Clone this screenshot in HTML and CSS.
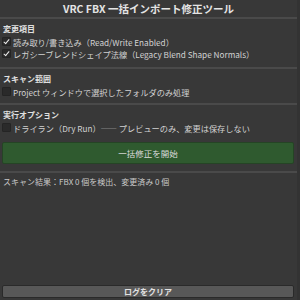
FILE: index.html
```html
<!DOCTYPE html>
<html lang="ja">

<head>
    <meta charset="UTF-8">
    <title>VRC FBX 一括インポート修正ツール</title>
    <link rel="stylesheet" href="styles.css">
</head>

<body>
    <div class="panel">
        <h1 class="title">VRC FBX 一括インポート修正ツール</h1>
        <div class="sep"></div>

        <div class="section sec1">
            <h2>変更項目</h2>
            <label class="row"><span class="box on"></span>読み取り/書き込み（Read/Write Enabled）</label>
            <label class="row"><span class="box on"></span>レガシーブレンドシェイプ法線（Legacy Blend Shape Normals）</label>
        </div>
        <div class="sep"></div>

        <div class="section sec2">
            <h2>スキャン範囲</h2>
            <label class="row"><span class="box"></span>Project ウィンドウで選択したフォルダのみ処理</label>
        </div>
        <div class="sep"></div>

        <div class="section sec3">
            <h2>実行オプション</h2>
            <label class="row"><span class="box"></span>ドライラン（Dry Run）—— プレビューのみ、変更は保存しない</label>
        </div>

        <button class="btn-run">一括修正を開始</button>
        <div class="sep sep-low"></div>

        <p class="result">スキャン結果：FBX 0 個を検出、変更済み 0 個</p>

        <button class="btn-clear">ログをクリア</button>
    </div>
</body>

</html>
```

FILE: styles.css
```css
* {
    margin: 0;
    padding: 0;
    box-sizing: border-box;
}

html,
body {
    height: 100%;
    background: #383838;
}

body {
    font-family: "Noto Sans CJK JP", "Noto Sans", sans-serif;
    color: #d2d2d2;
    font-size: 8.2px;
}

.panel {
    height: 300px;
    display: flex;
    flex-direction: column;
    border-right: 3px solid #333;
}

.title {
    height: 17px;
    line-height: 17px;
    text-align: center;
    font-size: 10.5px;
    font-weight: bold;
    color: #e4e4e4;
}

.sep {
    height: 2px;
    background: #4a4a4a;
}

.section {
    padding: 4px 3px 0 3px;
}

.sec1 {
    padding-bottom: 8px;
}

.sec2 {
    padding-bottom: 6px;
}

h2 {
    height: 12px;
    line-height: 12px;
    font-size: 8px;
    font-weight: bold;
    color: #e0e0e0;
}

.row {
    display: flex;
    align-items: center;
    height: 11px;
    margin-top: 1px;
    white-space: nowrap;
}

.box {
    width: 9px;
    height: 9px;
    margin: 0 2px 0 -1px;
    background: #2a2a2a;
    border: 1px solid #242424;
    border-radius: 1px;
    position: relative;
}

/* check mark */
.box.on::after {
    content: "";
    position: absolute;
    left: 2px;
    top: 0px;
    width: 2px;
    height: 5px;
    border: solid #eee;
    border-width: 0 1.5px 1.5px 0;
    transform: rotate(40deg);
}

.btn-run {
    margin: 9px 3px 0 2px;
    height: 22px;
    background: #2f5a2f;
    border: 1px solid #254425;
    border-radius: 2px;
    color: #dcdcdc;
    font-family: inherit;
    font-size: 8.5px;
}

.sep-low {
    margin-top: 7px;
}

.result {
    height: 12px;
    line-height: 12px;
    margin-top: 3px;
    padding-left: 3px;
    font-size: 8px;
    color: #c8c8c8;
}

.btn-clear {
    margin: auto 3px 2px 2px;
    height: 13px;
    background: #585858;
    border: 1px solid #2a2a2a;
    border-radius: 2px;
    color: #e2e2e2;
    font-family: inherit;
    font-size: 8px;
    font-weight: bold;
}
```
